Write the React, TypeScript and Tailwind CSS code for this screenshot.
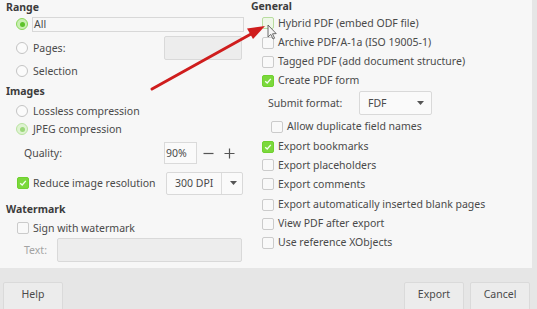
import React from "react";

const font = { fontFamily: '"Noto Sans", "Open Sans", sans-serif' };

const Radio = ({ checked, focus }: { checked?: boolean; focus?: boolean }) => (
	<span
		className={`flex h-[12px] w-[12px] shrink-0 items-center justify-center rounded-full border ${
			checked
				? focus
					? "border-[#8ad85a] bg-[#c9efb2]"
					: "border-[#b9e3a0] bg-[#dff3d2]"
				: "border-[#c4c4c4] bg-[#fbfbfb]"
		}`}
	>
		{checked && (
			<span className={`h-[5px] w-[5px] rounded-full ${focus ? "bg-[#5cc22a]" : "bg-[#9bd77a]"}`} />
		)}
	</span>
);

const Check = ({ checked, hover }: { checked?: boolean; hover?: boolean }) => (
	<span
		className={`flex h-[12px] w-[12px] shrink-0 items-center justify-center rounded-[2px] border ${
			checked
				? "border-[#6fd12e] bg-[#7bd83c]"
				: hover
					? "border-[#b8dca0] bg-[#eef7e8]"
					: "border-[#cbcbcb] bg-[#f9f9f9]"
		}`}
	>
		{checked && (
			<svg width="8" height="8" viewBox="0 0 8 8">
				<path d="M1.2 4.2 L3.2 6 L6.8 1.8" stroke="#f4fff0" strokeWidth="1.3" fill="none" />
			</svg>
		)}
	</span>
);

const Row = ({ h, children, className = "" }: { h: string; children: React.ReactNode; className?: string }) => (
	<div className={`flex items-center ${h} ${className}`}>{children}</div>
);

const Arrow = () => (
	<svg className="pointer-events-none absolute left-0 top-0" width="537" height="309">
		<line x1="152" y1="89" x2="251" y2="34" stroke="#cf1d1d" strokeWidth="3" strokeLinecap="round" />
		<polygon points="265,26 247,28.5 253,39" fill="#cf1d1d" />
		<path
			d="M268 25 L268 37 L270.8 34.4 L273 39 L274.6 38.2 L272.5 33.8 L276.2 33.6 Z"
			fill="#f5f5f5"
			stroke="#5a5a5a"
			strokeWidth="0.9"
		/>
	</svg>
);

const App = () => {
	return (
		<div
			className="relative h-[309px] w-[537px] overflow-hidden bg-[#e6e6e6] text-[10.5px] leading-[13px] text-[#4a4a4a]"
			style={font}
		>
			<div className="flex h-[268px] w-[532px] bg-[#f7f7f7]">
				{/* left column */}
				<div className="flex w-[251px] flex-col pl-[6px]">
					<Row h="h-[14px]">
						<span className="font-bold text-[#3c3c3c]">Range</span>
					</Row>
					<Row h="h-[20px]" className="pl-[10px]">
						<Radio checked focus />
						<span className="ml-[4px] flex h-[15px] w-[212px] items-center border border-[#d8d8d8] pl-[1px]">
							All
						</span>
					</Row>
					<Row h="h-[28px]" className="pl-[10px]">
						<Radio />
						<span className="ml-[5px] w-[131px]">Pages:</span>
						<span className="h-[24px] w-[78px] rounded-[2px] border border-[#d9d9d9] bg-[#ededed]" />
					</Row>
					<Row h="h-[18px]" className="pl-[10px]">
						<Radio />
						<span className="ml-[5px]">Selection</span>
					</Row>
					<Row h="h-[22px]">
						<span className="font-bold text-[#3c3c3c]">Images</span>
					</Row>
					<Row h="h-[18px]" className="pl-[10px]">
						<Radio />
						<span className="ml-[5px]">Lossless compression</span>
					</Row>
					<Row h="h-[18px]" className="pl-[10px]">
						<Radio checked />
						<span className="ml-[5px]">JPEG compression</span>
					</Row>
					<Row h="h-[30px]" className="pl-[18px]">
						<span className="w-[140px]">Quality:</span>
						<span className="flex h-[22px] w-[33px] items-center border border-[#dadada] bg-[#fafafa] pl-[1px]">
							90%
						</span>
						<span className="flex w-[22px] justify-center">
							<svg width="11" height="11" viewBox="0 0 11 11">
								<path d="M0.5 5.5 H10.5" stroke="#555" strokeWidth="1.2" />
							</svg>
						</span>
						<span className="flex w-[20px] justify-center">
							<svg width="11" height="11" viewBox="0 0 11 11">
								<path d="M0.5 5.5 H10.5 M5.5 0.5 V10.5" stroke="#555" strokeWidth="1.2" />
							</svg>
						</span>
					</Row>
					<Row h="h-[30px]" className="pl-[11px]">
						<Check checked />
						<span className="ml-[4px] w-[133px]">Reduce image resolution</span>
						<span className="flex h-[23px] w-[77px] items-center rounded-[2px] border border-[#d9d9d9] bg-[#fafafa]">
							<span className="w-[55px] border-r border-[#dcdcdc] pl-[8px] leading-[21px]">300 DPI</span>
							<svg className="ml-[8px]" width="7" height="4" viewBox="0 0 7 4">
								<path d="M0 0 L7 0 L3.5 4 Z" fill="#555" />
							</svg>
						</span>
					</Row>
					<Row h="h-[22px]">
						<span className="font-bold text-[#3c3c3c]">Watermark</span>
					</Row>
					<Row h="h-[16px]" className="pl-[11px]">
						<Check />
						<span className="ml-[4px]">Sign with watermark</span>
					</Row>
					<Row h="h-[28px]" className="pl-[18px]">
						<span className="w-[33px] text-[#a3a3a3]">Text:</span>
						<span className="h-[24px] w-[185px] rounded-[2px] border border-[#d9d9d9] bg-[#ededed]" />
					</Row>
				</div>

				{/* right column */}
				<div className="flex flex-1 flex-col">
					<Row h="h-[13px]">
						<span className="font-bold text-[#3c3c3c]">General</span>
					</Row>
					<Row h="h-[20px]" className="pl-[11px]">
						<Check hover />
						<span className="ml-[4px]">Hybrid PDF (embed ODF file)</span>
					</Row>
					<Row h="h-[19px]" className="pl-[11px]">
						<Check />
						<span className="ml-[4px]">Archive PDF/A-1a (ISO 19005-1)</span>
					</Row>
					<Row h="h-[19px]" className="pl-[11px]">
						<Check />
						<span className="ml-[4px]">Tagged PDF (add document structure)</span>
					</Row>
					<Row h="h-[19px]" className="pl-[11px]">
						<Check checked />
						<span className="ml-[4px]">Create PDF form</span>
					</Row>
					<Row h="h-[26px]" className="pl-[17px]">
						<span className="w-[91px]">Submit format:</span>
						<span className="flex h-[24px] w-[73px] items-center justify-between rounded-[2px] border border-[#d9d9d9] bg-[#fafafa] pl-[8px] pr-[7px]">
							FDF
							<svg width="7" height="4" viewBox="0 0 7 4">
								<path d="M0 0 L7 0 L3.5 4 Z" fill="#555" />
							</svg>
						</span>
					</Row>
					<Row h="h-[21px]" className="pl-[20px]">
						<Check />
						<span className="ml-[4px]">Allow duplicate field names</span>
					</Row>
					<Row h="h-[19px]" className="pl-[11px]">
						<Check checked />
						<span className="ml-[4px]">Export bookmarks</span>
					</Row>
					<Row h="h-[18px]" className="pl-[11px]">
						<Check />
						<span className="ml-[4px]">Export placeholders</span>
					</Row>
					<Row h="h-[20px]" className="pl-[11px]">
						<Check />
						<span className="ml-[4px]">Export comments</span>
					</Row>
					<Row h="h-[19px]" className="mt-[1px] pl-[11px]">
						<Check />
						<span className="ml-[4px]">Export automatically inserted blank pages</span>
					</Row>
					<Row h="h-[19px]" className="pl-[11px]">
						<Check />
						<span className="ml-[4px]">View PDF after export</span>
					</Row>
					<Row h="h-[19px]" className="pl-[11px]">
						<Check />
						<span className="ml-[4px]">Use reference XObjects</span>
					</Row>
				</div>
			</div>

			{/* footer */}
			<div className="flex items-start justify-between pl-[3px] pr-[7px] pt-[14px]">
				<button className="h-[30px] w-[60px] rounded-[2px] border border-[#dadada] bg-[#ececec] pb-[6px] text-[#4a4a4a]">
					Help
				</button>
				<div className="flex gap-[6px]">
					<button className="h-[30px] w-[60px] rounded-[2px] border border-[#dadada] bg-[#ececec] pb-[6px] text-[#4a4a4a]">
						Export
					</button>
					<button className="h-[30px] w-[60px] rounded-[2px] border border-[#dadada] bg-[#ececec] pb-[6px] text-[#4a4a4a]">
						Cancel
					</button>
				</div>
			</div>

			<Arrow />
		</div>
	);
};

export default App;
